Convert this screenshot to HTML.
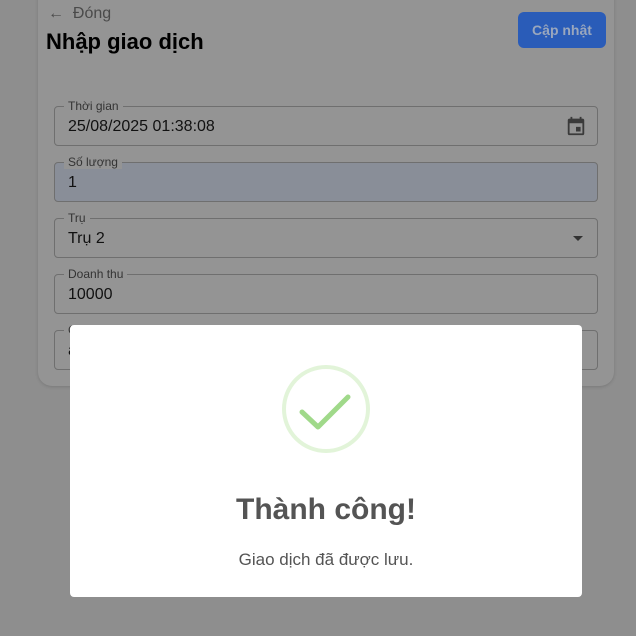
<!DOCTYPE html><html><head><style>
body{margin:0;width:636px;height:636px;background:#8e8e8e;font-family:"Liberation Sans",sans-serif;position:relative;overflow:hidden}
.card{position:absolute;left:38px;top:-20px;width:576px;height:406px;background:#949494;border-radius:14px;box-shadow:0 1px 3px rgba(0,0,0,.15)}
.f{position:absolute;left:54px;width:542px;height:38px;border:1px solid #6f6f6f;border-radius:4px;font-size:16px;color:#111}
.f span.l{position:absolute;left:9px;top:-8px;font-size:12px;color:#333;background:#949494;padding:0 4px;line-height:14px}
.f span.v{position:absolute;left:13px;top:11px}
</style></head><body>
<div class="card"></div>
<div style="position:absolute;left:48px;top:5px;font-size:16px;color:#4a4a4a">←&nbsp; Đóng</div>
<div style="position:absolute;left:46px;top:29px;font-size:22px;font-weight:bold;color:#000">Nhập giao dịch</div>
<div style="position:absolute;left:518px;top:12px;width:88px;height:36px;background:#2a5cb8;border-radius:6px;color:#9aa7bd;font-size:14px;font-weight:bold;text-align:center;line-height:36px">Cập nhật</div>
<div class="f" style="top:106px"><span class="l">Thời gian</span><span class="v">25/08/2025 01:38:08</span>
<svg style="position:absolute;right:10px;top:8px" width="22" height="22" viewBox="0 0 24 24"><path fill="#3a3a3a" d="M19 4h-1V2h-2v2H8V2H6v2H5a2 2 0 0 0-2 2v14a2 2 0 0 0 2 2h14a2 2 0 0 0 2-2V6a2 2 0 0 0-2-2zm0 16H5V9h14zM12 13h5v5h-5z"/></svg></div>
<div class="f" style="top:162px;background:#898e98"><span class="l">Số lượng</span><span class="v">1</span></div>
<div class="f" style="top:218px"><span class="l">Trụ</span><span class="v">Trụ 2</span><div style="position:absolute;right:14px;top:17px;border:5px solid transparent;border-top-color:#333"></div></div>
<div class="f" style="top:274px"><span class="l">Doanh thu</span><span class="v">10000</span></div>
<div class="f" style="top:330px"><span class="l">Ghi chú</span><span class="v">a</span></div>
<div style="position:absolute;left:70px;top:325px;width:512px;height:272px;background:#fff;border-radius:4px">
<svg style="position:absolute;left:211px;top:39px" width="90" height="90" viewBox="0 0 90 90"><circle cx="45" cy="45" r="42" fill="none" stroke="#e2f4d9" stroke-width="4"/><path d="M21 48 L37 63 L67 33" fill="none" stroke="#a0d98a" stroke-width="5" stroke-linecap="round" stroke-linejoin="round"/></svg>
<div style="position:absolute;left:0;right:0;top:168px;text-align:center;font-size:30px;font-weight:bold;color:#545454">Thành công!</div>
<div style="position:absolute;left:0;right:0;top:225px;text-align:center;font-size:17px;color:#545454">Giao dịch đã được lưu.</div>
</div>
</body></html>
